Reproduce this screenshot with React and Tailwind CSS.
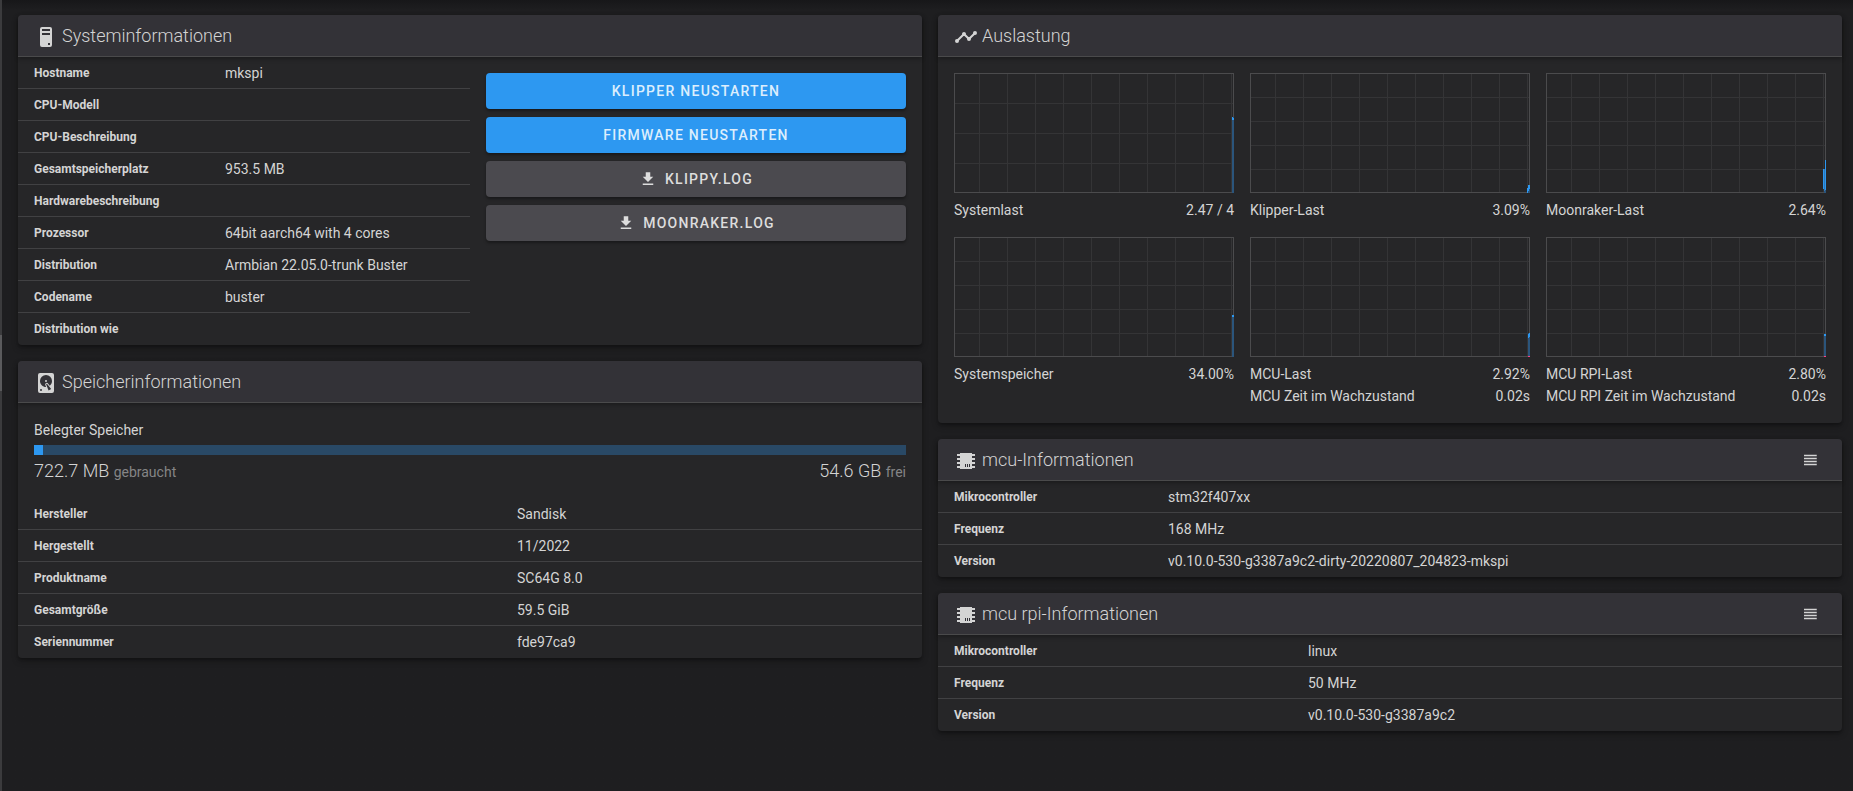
const PATHS = {
  tower:
    'M8,2H16A2,2 0 0,1 18,4V20A2,2 0 0,1 16,22H8A2,2 0 0,1 6,20V4A2,2 0 0,1 8,2M8,4V6H16V4H8M16,8H8V10H16V8M16,18H14V20H16V18Z',
  disk: 'M6,2H18A2,2 0 0,1 20,4V20A2,2 0 0,1 18,22H6A2,2 0 0,1 4,20V4A2,2 0 0,1 6,2M12,4A6,6 0 0,0 6,10C6,13.31 8.69,16 12.1,16L11.22,13.77C10.95,13.29 11.11,12.68 11.59,12.4L12.45,11.9C12.93,11.63 13.54,11.79 13.82,12.27L15.74,14.69C17.12,13.59 18,11.9 18,10A6,6 0 0,0 12,4M12,9A1,1 0 0,1 13,10A1,1 0 0,1 12,11A1,1 0 0,1 11,10A1,1 0 0,1 12,9M7,18A1,1 0 0,0 6,19A1,1 0 0,0 7,20A1,1 0 0,0 8,19A1,1 0 0,0 7,18M12.09,13.27L14.58,19.58L17.17,18.08L12.95,12.77L12.09,13.27Z',
  timeline:
    'M3,14L3.5,14.07L8.07,9.5C7.89,8.85 8.06,8.11 8.59,7.59C9.37,6.8 10.63,6.8 11.41,7.59C11.94,8.11 12.11,8.85 11.93,9.5L14.5,12.07L15,12C15.18,12 15.35,12 15.5,12.07L19.07,8.5C19,8.35 19,8.18 19,8A2,2 0 0,1 21,6A2,2 0 0,1 23,8A2,2 0 0,1 21,10C20.82,10 20.65,10 20.5,9.93L16.93,13.5C17,13.65 17,13.82 17,14A2,2 0 0,1 15,16A2,2 0 0,1 13,14L13.07,13.5L10.5,10.93C10.18,11 9.82,11 9.5,10.93L4.93,15.5L5,16A2,2 0 0,1 3,18A2,2 0 0,1 1,16A2,2 0 0,1 3,14Z',
  chip: 'M6,4H18V5H21V7H18V9H21V11H18V13H21V15H18V17H21V19H18V20H6V19H3V17H6V15H3V13H6V11H3V9H6V7H3V5H6V4M11,15V18H12V15H11M13,15V18H14V15H13M15,15V18H16V15H15Z',
  download: 'M5,20H19V18H5M19,9H15V3H9V9H5L12,16L19,9Z',
  lines: 'M4,5V7H21V5M4,11H21V9H4M4,19H21V17H4M4,15H21V13H4V15Z',
};

function Icon({ name, className }) {
  return (
    <svg viewBox="0 0 24 24" fill="currentColor" aria-hidden="true" className={className}>
      <path fillRule="evenodd" d={PATHS[name]} />
    </svg>
  );
}

function Card({ icon, title, action, children }) {
  return (
    <section className="rounded bg-[#262628] shadow-[0_2px_2px_rgba(0,0,0,0.14),0_3px_6px_rgba(0,0,0,0.3)]">
      <header className="flex h-[42px] items-center rounded-t border-b border-[#4a4a4b] bg-[#333237] px-4 shadow-[0_2px_4px_rgba(0,0,0,0.3)]">
        <div className="flex flex-1 items-center gap-1">
          <Icon name={icon} className="mt-0.5 size-6" />
          <h2 className="text-lg leading-8 font-light">{title}</h2>
        </div>
        {action}
      </header>
      {children}
    </section>
  );
}

function InfoTable({ rows, labelWidth }) {
  return (
    <table className="w-full table-fixed border-separate border-spacing-0 text-left">
      <tbody className="[&>tr:not(:last-child)>*]:border-b [&>tr:not(:last-child)>*]:border-[#414143]">
        {rows.map(([label, value]) => (
          <tr key={label}>
            <th scope="row" className={`h-8 px-4 text-xs font-bold ${labelWidth}`}>
              {label}
            </th>
            <td className="h-8 px-4 text-sm leading-5">{value}</td>
          </tr>
        ))}
      </tbody>
    </table>
  );
}

function ActionButton({ color, icon, children }) {
  return (
    <button
      type="button"
      className={`flex h-9 w-full items-center justify-center rounded text-sm font-medium tracking-[0.09em] uppercase shadow-[0_2px_3px_rgba(0,0,0,0.35)] ${color}`}
    >
      {icon && <Icon name={icon} className="mr-2 size-[18px]" />}
      {children}
    </button>
  );
}

function LoadChart({ name, rows, series, marker, captions }) {
  const columns = [25, 53, 81, 109, 137, 165, 193, 221, 249, 277];
  return (
    <figure>
      <svg viewBox="0 0 280 120" role="img" aria-label={name} className="block w-full" shapeRendering="crispEdges">
        {columns.map((x) => (
          <rect key={x} x={x} y="0" width="1" height="120" fill="#343436" />
        ))}
        {Array.from({ length: rows - 1 }, (_, i) => (
          <rect key={i} x="0" y={Math.round((120 * (i + 1)) / rows)} width="280" height="1" fill="#343436" />
        ))}
        <rect x="0.5" y="0.5" width="279" height="119" fill="none" stroke="#4b4b4d" />
        {series.map(([x, y, w, h, fill], i) => (
          <rect key={i} x={x} y={y} width={w} height={h} fill={fill} />
        ))}
        {marker && <rect x="278" y="119" width="2" height="1" fill="#ff4081" />}
      </svg>
      <figcaption className="pt-1.5 text-sm leading-[22px]">
        {captions.map(([label, value]) => (
          <div key={label} className="flex justify-between">
            <span>{label}</span>
            <span>{value}</span>
          </div>
        ))}
      </figcaption>
    </figure>
  );
}

const AREA = '#2b557c';
const EDGE = '#2d98f1';

const charts = [
  {
    name: 'Systemlast',
    rows: 4,
    series: [[278, 44, 2, 76, AREA], [278, 44, 1, 3, EDGE], [279, 45, 1, 2, EDGE]],
    captions: [['Systemlast', '2.47 / 4']],
  },
  {
    name: 'Klipper-Last',
    rows: 5,
    series: [[278, 112, 2, 8, AREA], [277, 115, 1, 5, EDGE], [278, 112, 1, 6, EDGE], [279, 112, 1, 4, EDGE]],
    captions: [['Klipper-Last', '3.09%']],
  },
  {
    name: 'Moonraker-Last',
    rows: 5,
    series: [[278, 96, 1, 24, AREA], [277, 96, 1, 20, EDGE], [278, 96, 1, 22, '#2b78bb'], [279, 87, 1, 30, EDGE], [279, 117, 1, 3, AREA]],
    captions: [['Moonraker-Last', '2.64%']],
  },
  {
    name: 'Systemspeicher',
    rows: 5,
    series: [[278, 78, 2, 42, AREA], [278, 78, 2, 2, EDGE]],
    captions: [['Systemspeicher', '34.00%']],
  },
  {
    name: 'MCU-Last',
    rows: 5,
    series: [[278, 96, 2, 24, AREA], [278, 97, 1, 4, EDGE], [279, 96, 1, 4, EDGE]],
    marker: true,
    captions: [['MCU-Last', '2.92%'], ['MCU Zeit im Wachzustand', '0.02s']],
  },
  {
    name: 'MCU RPI-Last',
    rows: 5,
    series: [[278, 97, 2, 23, AREA], [278, 97, 2, 2, EDGE]],
    marker: true,
    captions: [['MCU RPI-Last', '2.80%'], ['MCU RPI Zeit im Wachzustand', '0.02s']],
  },
];

const systemRows = [
  ['Hostname', 'mkspi'],
  ['CPU-Modell', ''],
  ['CPU-Beschreibung', ''],
  ['Gesamtspeicherplatz', '953.5 MB'],
  ['Hardwarebeschreibung', ''],
  ['Prozessor', '64bit aarch64 with 4 cores'],
  ['Distribution', 'Armbian 22.05.0-trunk Buster'],
  ['Codename', 'buster'],
  ['Distribution wie', ''],
];

const storageRows = [
  ['Hersteller', 'Sandisk'],
  ['Hergestellt', '11/2022'],
  ['Produktname', 'SC64G 8.0'],
  ['Gesamtgröße', '59.5 GiB'],
  ['Seriennummer', 'fde97ca9'],
];

const mcuRows = [
  ['Mikrocontroller', 'stm32f407xx'],
  ['Frequenz', '168 MHz'],
  ['Version', 'v0.10.0-530-g3387a9c2-dirty-20220807_204823-mkspi'],
];

const rpiRows = [
  ['Mikrocontroller', 'linux'],
  ['Frequenz', '50 MHz'],
  ['Version', 'v0.10.0-530-g3387a9c2'],
];

function MenuButton({ label }) {
  return (
    <button type="button" aria-label={label} className="flex h-8 w-8 items-center justify-center">
      <Icon name="lines" className="size-[18px]" />
    </button>
  );
}

export default function App() {
  const used = 1.05;
  return (
    <div className="flex min-h-screen bg-[#1e1e20] font-[Roboto,sans-serif] text-[#d4d4d4]">
      <div className="flex w-0.5 flex-col bg-[#3b3b3d]" aria-hidden="true">
        <div className="mt-[335px] h-14 bg-[#5a5a5c]" />
      </div>
      <main className="grid flex-1 grid-cols-2 items-start gap-4 bg-linear-to-b from-[#171719] to-[#1e1e20] to-[10px] pt-[15px] pr-[11px] pb-4 pl-4">
        <div className="flex flex-col gap-4">
          <Card icon="tower" title="Systeminformationen">
            <div className="grid grid-cols-2">
              <InfoTable rows={systemRows} labelWidth="w-[191px]" />
              <div className="flex flex-col gap-2 p-4">
                <ActionButton color="bg-[#2d98f1] text-[#dceefd]">Klipper neustarten</ActionButton>
                <ActionButton color="bg-[#2d98f1] text-[#dceefd]">Firmware neustarten</ActionButton>
                <ActionButton color="bg-[#4b4a4f] text-[#dddddd]" icon="download">
                  klippy.log
                </ActionButton>
                <ActionButton color="bg-[#4b4a4f] text-[#dddddd]" icon="download">
                  moonraker.log
                </ActionButton>
              </div>
            </div>
          </Card>

          <Card icon="disk" title="Speicherinformationen">
            <div className="px-4 pt-4 pb-3">
              <p id="used-storage" className="mb-1 text-sm leading-[22px]">
                Belegter Speicher
              </p>
              <div
                role="progressbar"
                aria-labelledby="used-storage"
                aria-valuenow={used}
                aria-valuemin={0}
                aria-valuemax={100}
                className="h-2.5 bg-[#294966]"
              >
                <div className="h-full bg-[#2d98f1]" style={{ width: `${used}%` }} />
              </div>
              <div className="flex justify-between text-lg leading-[31px] font-light">
                <p>
                  722.7 MB <span className="text-sm leading-5 font-normal text-[#858586]">gebraucht</span>
                </p>
                <p>
                  54.6 GB <span className="text-sm leading-5 font-normal text-[#858586]">frei</span>
                </p>
              </div>
            </div>
            <InfoTable rows={storageRows} labelWidth="w-[483px]" />
          </Card>
        </div>

        <div className="flex flex-col gap-4">
          <Card icon="timeline" title="Auslastung">
            <div className="grid grid-cols-3 gap-4 p-4">
              {charts.map((chart) => (
                <LoadChart key={chart.name} {...chart} />
              ))}
            </div>
          </Card>

          <Card icon="chip" title="mcu-Informationen" action={<MenuButton label="mcu" />}>
            <InfoTable rows={mcuRows} labelWidth="w-[214px]" />
          </Card>

          <Card icon="chip" title="mcu rpi-Informationen" action={<MenuButton label="mcu rpi" />}>
            <InfoTable rows={rpiRows} labelWidth="w-[354px]" />
          </Card>
        </div>
      </main>
    </div>
  );
}
